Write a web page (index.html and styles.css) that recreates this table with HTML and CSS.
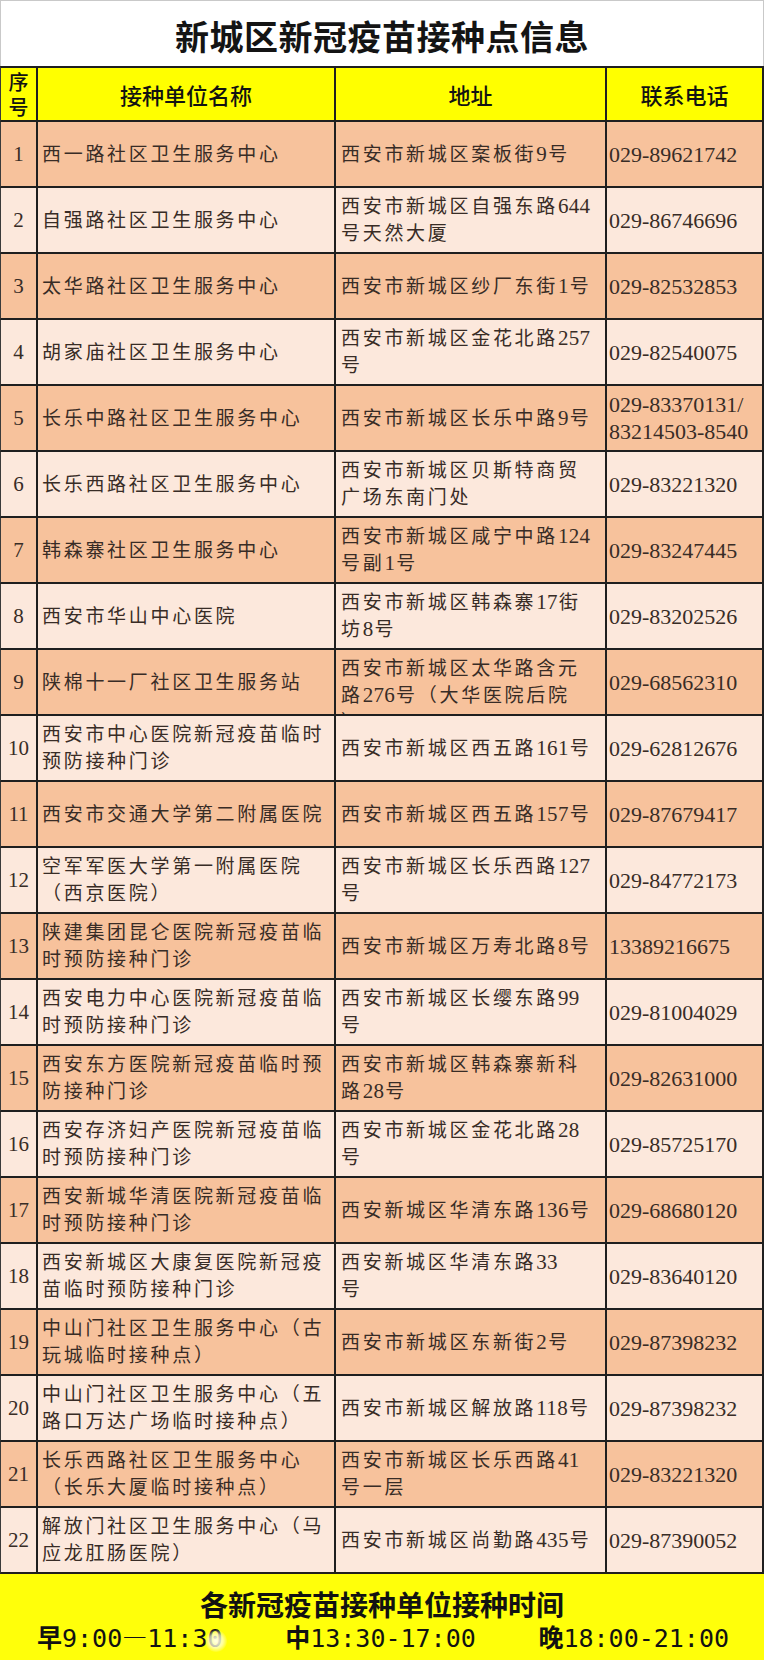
FILE: index.html
```html
<!DOCTYPE html>
<html lang="zh-CN">
<head>
<meta charset="utf-8">
<title>新城区新冠疫苗接种点信息</title>
<link rel="stylesheet" href="styles.css">
</head>
<body>
<div class="page">
  <div class="title">新城区新冠疫苗接种点信息</div>
  <div class="sheet">
    <div class="row head">
      <div class="cell c-no hd-no">序<br>号</div>
      <div class="cell c-hd">接种单位名称</div>
      <div class="cell c-hd">地址</div>
      <div class="cell c-hd">联系电话</div>
    </div>

    <div class="row odd"><div class="cell c-no">1</div><div class="cell c-name">西一路社区卫生服务中心</div><div class="cell c-addr"><div class="t">西安市新城区案板街<span class="n">9</span>号</div></div><div class="cell c-tel">029-89621742</div></div>
    <div class="row even"><div class="cell c-no">2</div><div class="cell c-name">自强路社区卫生服务中心</div><div class="cell c-addr"><div class="t">西安市新城区自强东路<span class="n">644</span><br>号天然大厦</div></div><div class="cell c-tel">029-86746696</div></div>
    <div class="row odd"><div class="cell c-no">3</div><div class="cell c-name">太华路社区卫生服务中心</div><div class="cell c-addr"><div class="t">西安市新城区纱厂东街<span class="n">1</span>号</div></div><div class="cell c-tel">029-82532853</div></div>
    <div class="row even"><div class="cell c-no">4</div><div class="cell c-name">胡家庙社区卫生服务中心</div><div class="cell c-addr"><div class="t">西安市新城区金花北路<span class="n">257</span><br>号</div></div><div class="cell c-tel">029-82540075</div></div>
    <div class="row odd"><div class="cell c-no">5</div><div class="cell c-name">长乐中路社区卫生服务中心</div><div class="cell c-addr"><div class="t">西安市新城区长乐中路<span class="n">9</span>号</div></div><div class="cell c-tel">029-83370131/<br>83214503-8540</div></div>
    <div class="row even"><div class="cell c-no">6</div><div class="cell c-name">长乐西路社区卫生服务中心</div><div class="cell c-addr"><div class="t">西安市新城区贝斯特商贸<br>广场东南门处</div></div><div class="cell c-tel">029-83221320</div></div>
    <div class="row odd"><div class="cell c-no">7</div><div class="cell c-name">韩森寨社区卫生服务中心</div><div class="cell c-addr"><div class="t">西安市新城区咸宁中路<span class="n">124</span><br>号副<span class="n">1</span>号</div></div><div class="cell c-tel">029-83247445</div></div>
    <div class="row even"><div class="cell c-no">8</div><div class="cell c-name">西安市华山中心医院</div><div class="cell c-addr"><div class="t">西安市新城区韩森寨<span class="n">17</span>街<br>坊<span class="n">8</span>号</div></div><div class="cell c-tel">029-83202526</div></div>
    <div class="row odd"><div class="cell c-no">9</div><div class="cell c-name">陕棉十一厂社区卫生服务站</div><div class="cell c-addr clip"><div class="t">西安市新城区太华路含元<br>路<span class="n">276</span>号（大华医院后院<br>）</div></div><div class="cell c-tel">029-68562310</div></div>
    <div class="row even"><div class="cell c-no">10</div><div class="cell c-name">西安市中心医院新冠疫苗临时<br>预防接种门诊</div><div class="cell c-addr"><div class="t">西安市新城区西五路<span class="n">161</span>号</div></div><div class="cell c-tel">029-62812676</div></div>
    <div class="row odd"><div class="cell c-no">11</div><div class="cell c-name">西安市交通大学第二附属医院</div><div class="cell c-addr"><div class="t">西安市新城区西五路<span class="n">157</span>号</div></div><div class="cell c-tel">029-87679417</div></div>
    <div class="row even"><div class="cell c-no">12</div><div class="cell c-name">空军军医大学第一附属医院<br>（西京医院）</div><div class="cell c-addr"><div class="t">西安市新城区长乐西路<span class="n">127</span><br>号</div></div><div class="cell c-tel">029-84772173</div></div>
    <div class="row odd"><div class="cell c-no">13</div><div class="cell c-name">陕建集团昆仑医院新冠疫苗临<br>时预防接种门诊</div><div class="cell c-addr"><div class="t">西安市新城区万寿北路<span class="n">8</span>号</div></div><div class="cell c-tel">13389216675</div></div>
    <div class="row even"><div class="cell c-no">14</div><div class="cell c-name">西安电力中心医院新冠疫苗临<br>时预防接种门诊</div><div class="cell c-addr"><div class="t">西安市新城区长缨东路<span class="n">99</span><br>号</div></div><div class="cell c-tel">029-81004029</div></div>
    <div class="row odd"><div class="cell c-no">15</div><div class="cell c-name">西安东方医院新冠疫苗临时预<br>防接种门诊</div><div class="cell c-addr"><div class="t">西安市新城区韩森寨新科<br>路<span class="n">28</span>号</div></div><div class="cell c-tel">029-82631000</div></div>
    <div class="row even"><div class="cell c-no">16</div><div class="cell c-name">西安存济妇产医院新冠疫苗临<br>时预防接种门诊</div><div class="cell c-addr"><div class="t">西安市新城区金花北路<span class="n">28</span><br>号</div></div><div class="cell c-tel">029-85725170</div></div>
    <div class="row odd"><div class="cell c-no">17</div><div class="cell c-name">西安新城华清医院新冠疫苗临<br>时预防接种门诊</div><div class="cell c-addr"><div class="t">西安新城区华清东路<span class="n">136</span>号</div></div><div class="cell c-tel">029-68680120</div></div>
    <div class="row even"><div class="cell c-no">18</div><div class="cell c-name">西安新城区大康复医院新冠疫<br>苗临时预防接种门诊</div><div class="cell c-addr"><div class="t">西安新城区华清东路<span class="n">33</span><br>号</div></div><div class="cell c-tel">029-83640120</div></div>
    <div class="row odd"><div class="cell c-no">19</div><div class="cell c-name">中山门社区卫生服务中心（古<br>玩城临时接种点）</div><div class="cell c-addr"><div class="t">西安市新城区东新街<span class="n">2</span>号</div></div><div class="cell c-tel">029-87398232</div></div>
    <div class="row even"><div class="cell c-no">20</div><div class="cell c-name">中山门社区卫生服务中心（五<br>路口万达广场临时接种点）</div><div class="cell c-addr"><div class="t">西安市新城区解放路<span class="n">118</span>号</div></div><div class="cell c-tel">029-87398232</div></div>
    <div class="row odd"><div class="cell c-no">21</div><div class="cell c-name">长乐西路社区卫生服务中心<br>（长乐大厦临时接种点）</div><div class="cell c-addr"><div class="t">西安市新城区长乐西路<span class="n">41</span><br>号一层</div></div><div class="cell c-tel">029-83221320</div></div>
    <div class="row even"><div class="cell c-no">22</div><div class="cell c-name">解放门社区卫生服务中心（马<br>应龙肛肠医院）</div><div class="cell c-addr"><div class="t">西安市新城区尚勤路<span class="n">435</span>号</div></div><div class="cell c-tel">029-87390052</div></div>
  </div>

  <div class="footer">
    <div class="foot-title">各新冠疫苗接种单位接种时间</div>
    <div class="foot-times">
      <span class="slot"><span class="ch">早</span>9:00<span class="dash">—</span>11:3<span class="smudge">0</span></span>
      <span class="slot"><span class="ch">中</span>13:30-17:00</span>
      <span class="slot"><span class="ch">晚</span>18:00-21:00</span>
    </div>
  </div>
</div>
</body>
</html>
```

FILE: styles.css
```css
html, body {
  margin: 0;
  padding: 0;
  background: #ffffff;
}

body {
  font-family: "Noto Sans CJK SC", sans-serif;
  color: #222;
}

.page {
  width: 764px;
}

.title {
  height: 66px;
  box-sizing: border-box;
  border: 1px solid #c9c9c9;
  border-bottom: none;
  padding-top: 4px;
  display: flex;
  align-items: center;
  justify-content: center;
  font-size: 34px;
  font-weight: 700;
  color: #141414;
  letter-spacing: 0.5px;
}

.sheet {
  display: flex;
  flex-direction: column;
}

.row {
  display: grid;
  grid-template-columns: 37px 298px 271px 157px;
  height: 66px;
  box-sizing: border-box;
  border-left: 1px solid #3a3a3a;
  border-bottom: 2px solid #1f1f1f;
}

.row.head {
  height: 56px;
  border-top: 2px solid #1f1f1f;
  background: #ffff00;
}

.row.odd {
  background: #f7c29c;
}

.row.even {
  background: #fce8dc;
}

.cell {
  border-right: 2px solid #1f1f1f;
  display: flex;
  align-items: center;
  overflow: hidden;
  white-space: nowrap;
  line-height: 27px;
  color: #382c26;
  text-spacing-trim: space-all;
}

.c-hd {
  justify-content: center;
  font-size: 22px;
  font-weight: 500;
  color: #121212;
}

.c-no {
  justify-content: center;
  font-family: "Liberation Serif", "Noto Sans CJK SC", serif;
  font-size: 21px;
}

.hd-no {
  font-family: "Noto Sans CJK SC", sans-serif;
  font-size: 20px;
  line-height: 25px;
  font-weight: 500;
  color: #121212;
}

.c-name,
.c-addr {
  font-family: "Liberation Serif", "Noto Sans CJK SC", serif;
  font-size: 19px;
  letter-spacing: 2.7px;
}

.c-name {
  padding-left: 4px;
}

.c-addr {
  padding-left: 5px;
}

.c-addr .n {
  font-size: 21px;
  letter-spacing: 0.3px;
  margin-right: 1px;
}

.c-addr.clip {
  align-items: flex-start;
  padding-top: 5px;
}

.c-tel {
  font-family: "Liberation Serif", serif;
  font-size: 22px;
  padding-left: 2px;
}

.footer {
  height: 86px;
  box-sizing: border-box;
  background: #ffff0a;
  padding-top: 14px;
  color: #121212;
}

.foot-title {
  text-align: center;
  font-size: 28px;
  font-weight: 700;
  line-height: 32px;
}

.foot-times {
  display: flex;
  justify-content: space-between;
  padding: 0 35px 0 37px;
  font-family: "DejaVu Sans Mono", "Noto Sans CJK SC", monospace;
  font-size: 25px;
  font-weight: 400;
  line-height: 32px;
}

.slot {
  white-space: nowrap;
}

.ch {
  font-family: "Noto Sans CJK SC", sans-serif;
  font-weight: 700;
}

.dash {
  font-family: "Noto Sans CJK SC", sans-serif;
}

.smudge {
  position: relative;
}

.smudge::after {
  content: "";
  position: absolute;
  left: -2px;
  top: 6px;
  width: 22px;
  height: 22px;
  border-radius: 50%;
  background: radial-gradient(circle, rgba(255, 255, 240, 0.95) 0%, rgba(255, 255, 220, 0.7) 45%, rgba(255, 255, 0, 0) 75%);
}
```
